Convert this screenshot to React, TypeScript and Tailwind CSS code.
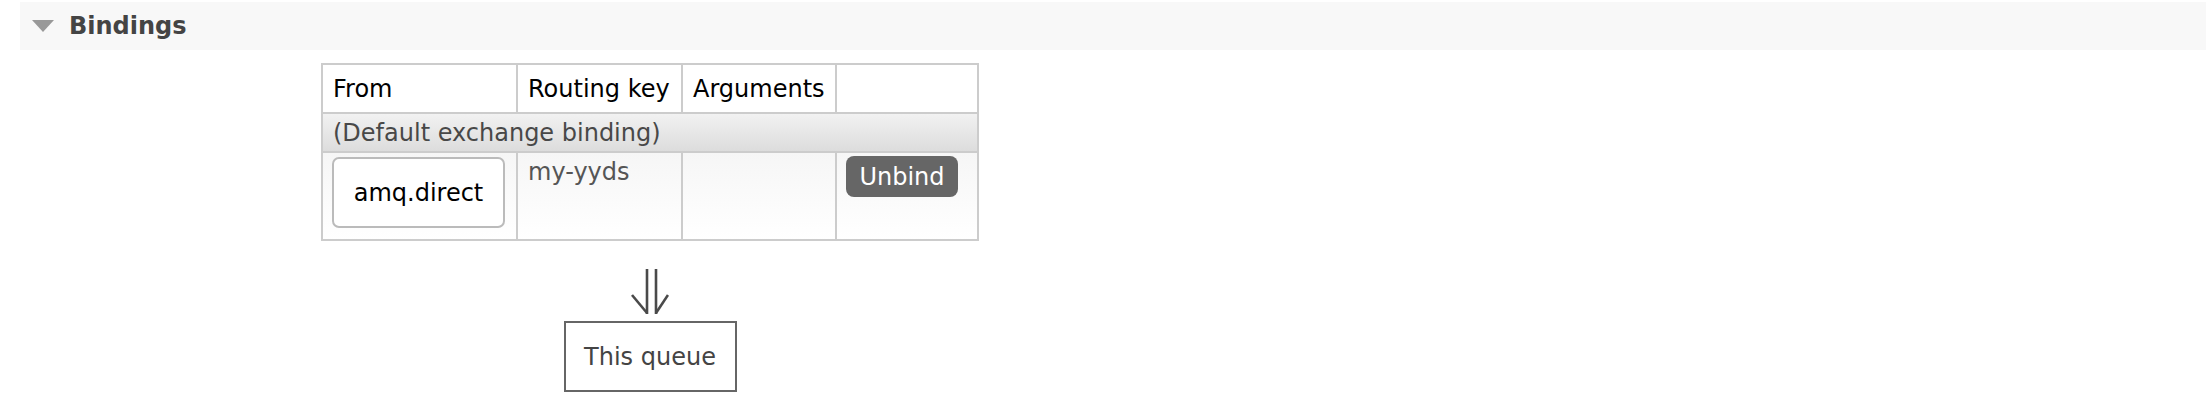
export default function App() {
  return (
    <div className="min-h-[420px] bg-white pt-[2px] font-['DejaVu_Sans',Verdana,sans-serif] text-[24px] leading-[28px]">
      {/* Section header */}
      <div className="ml-[20px] flex h-[48px] items-center bg-[#f8f8f8]">
        <svg width="22" height="12" viewBox="0 0 22 12" className="ml-[12px] shrink-0">
          <polygon points="0,0 22,0 11,12" fill="#999999" />
        </svg>
        <h2 className="ml-[15px] font-bold text-[#444]">Bindings</h2>
      </div>

      {/* Bindings diagram */}
      <div className="ml-[322px] mt-[13px] flex w-[656px] flex-col items-center">
        <table className="w-[656px] table-fixed border-collapse border-2 border-[#cccccc]">
          <colgroup>
            <col className="w-[195px]" />
            <col className="w-[165px]" />
            <col className="w-[154px]" />
            <col className="w-[142px]" />
          </colgroup>
          <thead>
            <tr className="h-[49px] bg-white text-left text-black">
              <th className="border-2 border-[#cccccc] px-[10px] font-normal">From</th>
              <th className="border-2 border-[#cccccc] px-[10px] font-normal">Routing key</th>
              <th className="border-2 border-[#cccccc] px-[10px] font-normal">Arguments</th>
              <th className="border-2 border-[#cccccc] px-[10px] font-normal"></th>
            </tr>
          </thead>
          <tbody>
            <tr className="h-[39px] bg-linear-to-b from-[#f2f2f2] to-[#dcdcdc]">
              <td colSpan={4} className="border-2 border-[#cccccc] px-[10px] text-[#484848]">
                (Default exchange binding)
              </td>
            </tr>
            <tr className="h-[88px] bg-linear-to-b from-[#f6f6f6] to-white align-top">
              <td className="border-2 border-[#cccccc] px-[9px] pt-[4px]">
                <div className="flex h-[71px] w-[173px] items-center justify-center rounded-[7px] border-2 border-[#bbbbbb] bg-white text-black">
                  amq.direct
                </div>
              </td>
              <td className="border-2 border-[#cccccc] px-[10px] pt-[5px] text-[#555]">my-yyds</td>
              <td className="border-2 border-[#cccccc]"></td>
              <td className="border-2 border-[#cccccc] px-[9px] pt-[3px]">
                <button className="flex h-[41px] w-[112px] items-center justify-center rounded-[8px] bg-[#666666] text-white">
                  Unbind
                </button>
              </td>
            </tr>
          </tbody>
        </table>

        <svg width="38" height="46" viewBox="0 0 38 46" className="mt-[28px]" fill="none" stroke="#4a4a4a" strokeWidth="2.6">
          <line x1="16" y1="0" x2="16" y2="45" />
          <line x1="25" y1="0" x2="25" y2="45" />
          <line x1="1" y1="26" x2="16" y2="44" />
          <line x1="37" y1="26" x2="25" y2="44" />
        </svg>

        <div className="mt-[6px] flex h-[71px] w-[173px] items-center justify-center border-2 border-[#666666] text-[#444]">
          This queue
        </div>
      </div>
    </div>
  );
}
